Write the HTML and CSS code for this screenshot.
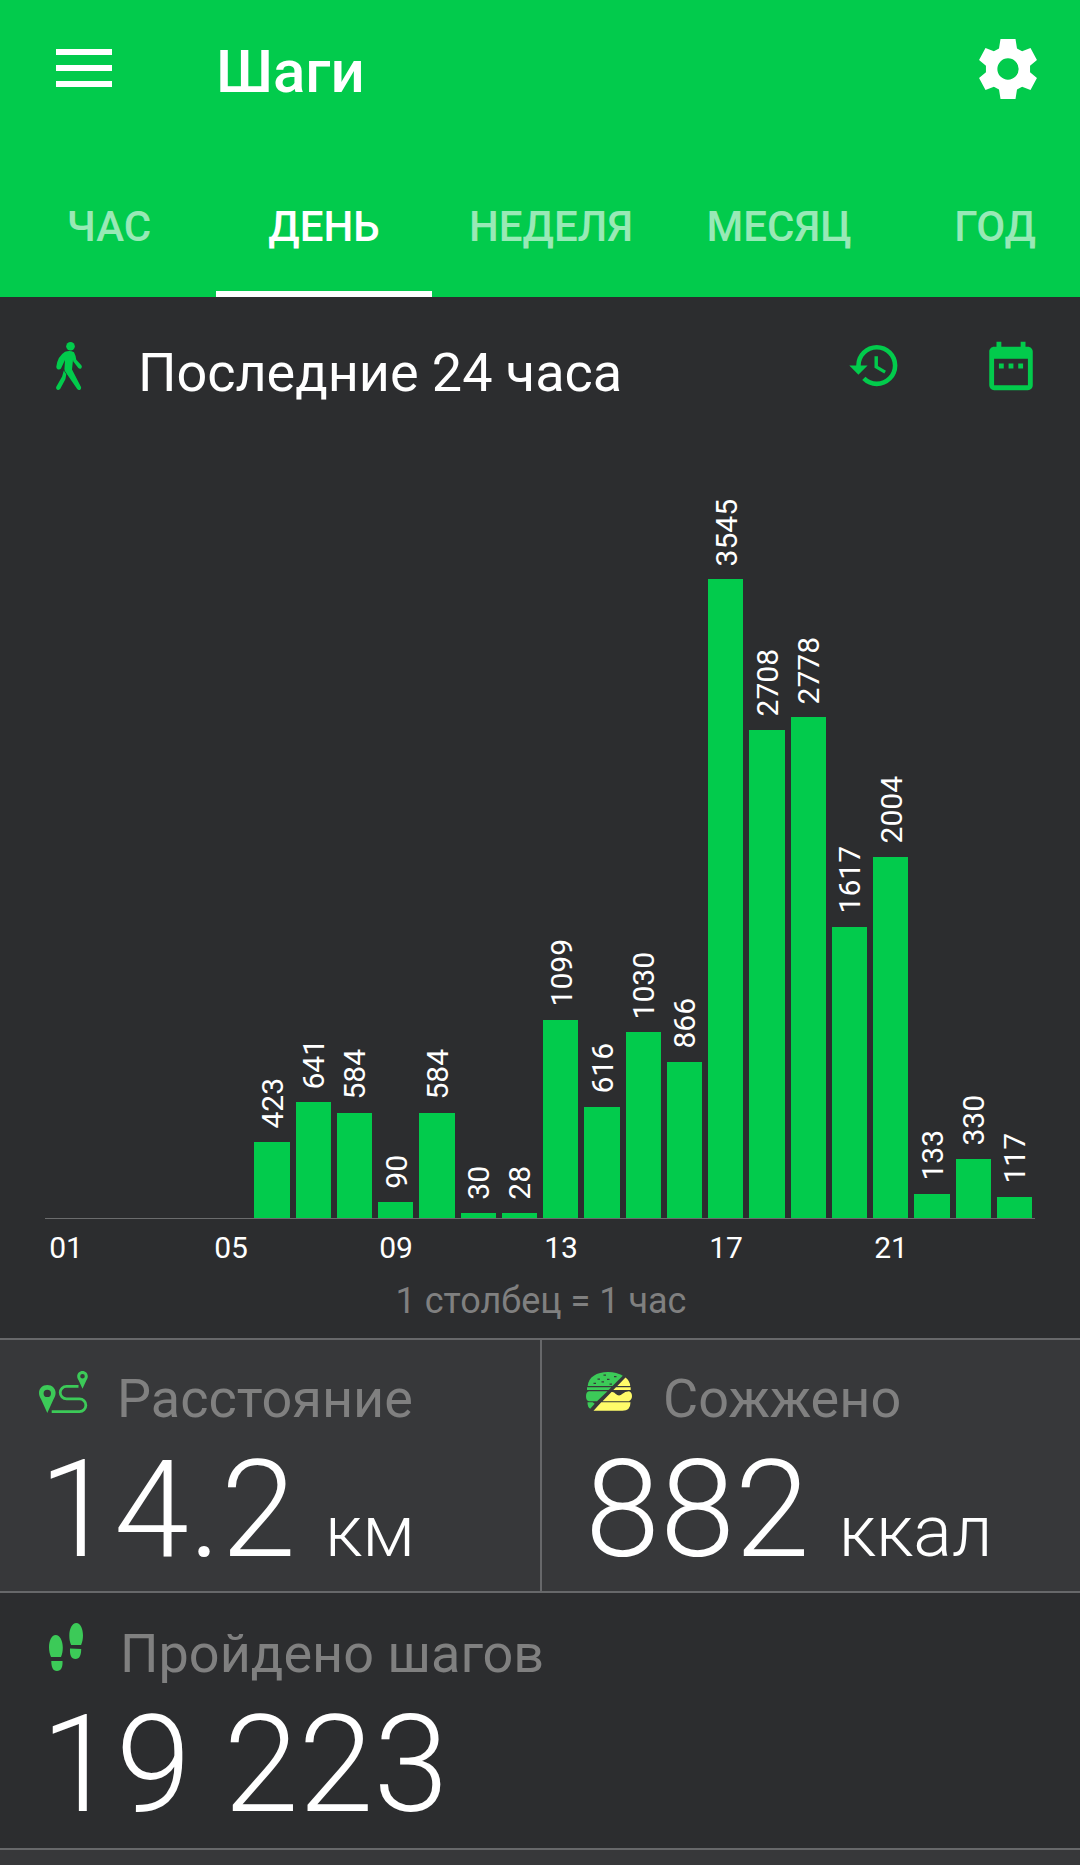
FILE: index.html
```
<!DOCTYPE html>
<html lang="ru">
<head>
    <meta charset="UTF-8">
    <meta name="viewport" content="width=device-width, initial-scale=1.0">
    <title>Шаги</title>
    <link rel="stylesheet" href="styles.css">
</head>
<body>
    <header class="header">
        <div class="toolbar">
            <svg class="menu-icon" viewBox="0 0 56 38"><path d="M0 0h56v6H0zM0 16h56v6H0zM0 32h56v6H0z"/></svg>
            <h1>Шаги</h1>
            <svg class="settings-icon" viewBox="0 0 24 24"><path fill-rule="evenodd" d="M9.500 2h5l.5 3.200L16.700 6.100 19.500 5l2.150 4-2.300 1.900v2.200l2.300 1.900-2.150 4-2.800-1.100-1.700.9-.5 3.200h-5L9 18.800l-1.700-.9L4.500 19l-2.150-4 2.300-1.900v-2.200L2.350 9 4.500 5l2.800 1.100L9 5.200zM12 8.450a3.550 3.550 0 1 0 0 7.100 3.550 3.550 0 0 0 0-7.100z"/></svg>
        </div>
        <nav class="tabs">
            <a class="tab">Час</a>
            <a class="tab active">День</a>
            <a class="tab tab-week">Неделя</a>
            <a class="tab">Месяц</a>
            <a class="tab">Год</a>
        </nav>
    </header>

    <section class="period">
        <svg class="walk-icon" viewBox="0 0 26 48">
            <circle cx="14.500" cy="4.300" r="4.300"/>
            <path d="M9 9.800q5-1.600 9 .4 2 3.800 2.300 7.500l5 5.500q1.200 1.500-.2 3.200-1.500.8-2.800-.5l-5-6.300-.3-1.500-1 9.500 9 17.500q.5 2-1.300 2.900-1.800.3-2.700-1.300L9.500 30q-1.300-1.500-1-4l.5-8-4 8.500q-1.200 1.600-3.500.8Q0 26 .4 24.300q1.300-10 8.600-14.500z"/>
            <path d="M7.800 28.500l2.500 3.700-.9 5-5.100 9.600q-1.200 1.700-3 1-1.700-1-1-3l5.800-10.300z"/>
        </svg>
        <h2>Последние 24 часа</h2>
        <svg class="history-icon" viewBox="0 0 24 24"><path d="M13 3a9 9 0 0 0-9 9H1l3.890 3.890.07.14L9 12H6c0-3.870 3.130-7 7-7s7 3.130 7 7-3.130 7-7 7c-1.930 0-3.680-.79-4.940-2.060l-1.420 1.420A8.954 8.954 0 0 0 13 21a9 9 0 0 0 0-18zm-1 5v5l4.280 2.540.72-1.210-3.500-2.080V8H12z"/></svg>
        <svg class="date-icon" viewBox="0 0 24 24"><path d="M9 11H7v2h2v-2zm4 0h-2v2h2v-2zm4 0h-2v2h2v-2zm2-7h-1V2h-2v2H8V2H6v2H5c-1.110 0-1.990.9-1.990 2L3 20a2 2 0 0 0 2 2h14c1.100 0 2-.9 2-2V6c0-1.100-.9-2-2-2zm0 16H5V9h14v11z"/></svg>
    </section>

    <section class="chart">
        <div class="bars" id="bars"></div>
        <div class="hours" id="hours"></div>
        <p class="legend">1 столбец = 1 час</p>
    </section>

    <section class="stats">
        <div class="stat">
            <div class="stat-label">
                <svg class="route-icon" viewBox="0 0 49 42">
                    <path class="fill" fill-rule="evenodd" d="M8.300 14C3.500 14 0 17.500 0 22c0 2.500 1 4.500 2.300 6.800L8.300 42l6-13.200C15.600 26.500 16.600 24.500 16.600 22c0-4.500-3.500-8-8.300-8zm0 4.700a3.700 3.700 0 1 0 0 7.400 3.700 3.700 0 0 0 0-7.400z"/>
                    <path class="fill" fill-rule="evenodd" d="M43.500 0c-3 0-5.300 2.300-5.300 5.200 0 1.600.7 2.900 1.500 4.300l3.800 8.300 3.800-8.300c.8-1.400 1.500-2.700 1.500-4.300C48.800 2.300 46.500 0 43.500 0zm0 3a2.300 2.300 0 1 0 0 4.600 2.300 2.300 0 0 0 0-4.600z"/>
                    <path class="line" d="M39.500 15.300H27.500a6.300 6.300 0 0 0 0 12.600H40.500a6.300 6.300 0 0 1 0 12.700H12.700"/>
                </svg>
                Расстояние
            </div>
            <div class="stat-value">14.2<span class="unit">км</span></div>
        </div>
        <div class="stat stat-burned">
            <div class="stat-label">
                <svg class="burger-icon" viewBox="0 0 46 39">
                    <path class="bun" d="M1.700 14C2.500 5 10.500 0 22 0q9 0 14.800 3.800L26.500 14z"/>
                    <path class="bun" d="M1 15.200h24.300l-2.700 2.800H1zM3 19.200h18.500L11 29.200H3Q0 28.500 0 24.200t3-5zM1.500 30.300h5.200l2 1.500-4.500 5Q1.300 35 1.500 30.300z"/>
                    <path class="cheese" d="M39.500 5.500Q44 9 44.200 14H31.300zM30 15.200h14.700V18H27.300zM25.500 20q2.500-.5 4 1.800 3.500 3.600 7 0 2.500-2.600 6.500-2.600Q46 20.500 46 24t-3 5.200H16.500zM15.300 30.300h29.200q0 8.500-8 8.500H7.500z"/>
                    <path class="seeds" d="M17.500 2.500h2.500v1.200h-2.500zM28 4h2.500v1.200H28zM11.500 6.500H14v1.200h-2.500zM21 6.800h2.500V8H21zM7.500 10.800H10V12H7.500zM15.500 9.300H18v1.200h-2.500zM23.500 11.500H26v1.200h-2.500z"/>
                </svg>
                Сожжено
            </div>
            <div class="stat-value">882<span class="unit">ккал</span></div>
        </div>
        <div class="stat stat-steps">
            <div class="stat-label">
                <svg class="steps-icon" viewBox="0 0 34 48">
                    <path d="M6.700 12C2.500 12 0 18 0 24.500c0 3.500.8 6.500 2 9.500h10c1.300-3 1.800-6 1.800-9.500C13.800 18 11 12 6.700 12zM2.300 38h11.200c.4 6-1.300 10-5.500 10S2.300 44 2.300 38z"/>
                    <path d="M27.300 0c-4.200 0-7 6-7 12.500 0 3.500.5 6.500 1.800 9.500h10c1.200-3 1.900-6 1.900-9.500C34 6 31.500 0 27.300 0zM21 25.500l11.200.5c0 6-1.500 10-5.700 10S20.600 32 21 25.500z"/>
                </svg>
                Пройдено шагов
            </div>
            <div class="stat-value">19 223</div>
        </div>
    </section>

    <script>
        const steps = [0, 0, 0, 0, 0, 423, 641, 584, 90, 584, 30, 28, 1099, 616, 1030, 866, 3545, 2708, 2778, 1617, 2004, 133, 330, 117];
        const maxHeight = 639;
        const max = Math.max(...steps);
        const bars = document.getElementById('bars');
        const hours = document.getElementById('hours');

        steps.forEach((value, index) => {
            const slot = document.createElement('div');
            slot.className = 'slot';
            if (value) {
                slot.innerHTML = `<span class="bar-value">${value}</span><div class="bar" style="height: ${value / max * maxHeight}px"></div>`;
            }
            bars.appendChild(slot);

            // every fourth hour gets a label
            const hour = document.createElement('span');
            hour.className = 'hour';
            if (index % 4 === 0) {
                hour.textContent = String(index + 1).padStart(2, '0');
            }
            hours.appendChild(hour);
        });
    </script>
</body>
</html>
```
FILE: styles.css
```
* {
    box-sizing: border-box;
}
body {
    margin: 0;
    height: 1865px;
    overflow: hidden;
    background-color: #37383a;
    color: #fff;
    font-family: Roboto, sans-serif;
}
h1, h2, p {
    margin: 0;
}
svg {
    display: block;
    flex: none;
}
.header {
    height: 297px;
    background-color: #02cb4c;
    overflow: hidden;
}
.toolbar {
    display: flex;
    align-items: flex-start;
    height: 165px;
    padding: 33px 36px 0 56px;
}
.menu-icon {
    width: 56px;
    height: 38px;
    margin-top: 16px;
    fill: #fff;
}
h1 {
    flex: 1;
    margin: 4px 0 0 104px;
    font-size: 60px;
    font-weight: 500;
    line-height: 70px;
}
.settings-icon {
    width: 72px;
    height: 72px;
    fill: #fff;
}
.tabs {
    display: flex;
    height: 132px;
}
.tab {
    flex: 0 0 216px;
    padding: 37px 0 0 2px;
    border-bottom: 6px solid transparent;
    color: rgba(255, 255, 255, 0.6);
    font-size: 42px;
    font-weight: 500;
    line-height: 50px;
    text-align: center;
    text-transform: uppercase;
}
.tab-week {
    flex-basis: 238px;
    padding-left: 0;
}
.tab.active {
    padding-left: 0;
    color: #fff;
    border-bottom-color: #fff;
}
.period {
    display: flex;
    align-items: flex-start;
    height: 143px;
    padding: 40px 40px 0 56px;
    background-color: #2c2d2f;
    fill: #02cb4c;
}
.walk-icon {
    width: 26px;
    height: 48px;
    margin-top: 5px;
}
h2 {
    flex: 1;
    margin: 4px 0 0 56px;
    font-size: 54px;
    font-weight: 400;
    line-height: 64px;
    letter-spacing: -0.05px;
}
.history-icon {
    width: 55px;
    height: 55px;
    margin: 1px 80px 0 0;
}
.date-icon {
    width: 58px;
    height: 58px;
}
.chart {
    height: 898px;
    background-color: #2c2d2f;
}
.bars {
    display: flex;
    height: 779px;
    margin: 0 45px;
    border-bottom: 1px solid #6b6c6d;
}
.slot {
    flex: 1;
    display: flex;
    flex-direction: column;
    justify-content: flex-end;
    padding: 0 3px;
}
.bar-value {
    align-self: center;
    margin: 0 -1px 13px 0;
    font-size: 30px;
    line-height: 35px;
    writing-mode: vertical-rl;
    transform: rotate(180deg);
}
.bar {
    background-color: #02cb4c;
}
.hours {
    display: flex;
    height: 61px;
    margin: 0 45px;
    padding-top: 11px;
    font-size: 30px;
    line-height: 36px;
}
.hour {
    flex: 1 1 0;
    padding-left: 1px;
    text-align: center;
}
.legend {
    padding-left: 2px;
    color: #808080;
    font-size: 36px;
    line-height: 42px;
    text-align: center;
}
.stats {
    display: grid;
    grid-template-columns: 540px 540px;
    fill: #3cca58;
}
.stat {
    height: 253px;
    padding: 27px 38px 0;
    border-top: 2px solid #67686a;
}
.stat-burned {
    padding-left: 44px;
    border-left: 2px solid #67686a;
}
.stat-steps {
    grid-column: span 2;
    height: 259px;
    padding-top: 29px;
    border-bottom: 2px solid #67686a;
    background-color: #2c2d2f;
}
.stat-label {
    display: flex;
    align-items: flex-start;
    height: 64px;
    color: #808080;
    font-size: 54px;
    line-height: 63px;
}
.route-icon {
    width: 49px;
    height: 42px;
    margin: 4px 29px 0 1px;
}
.route-icon .line {
    fill: none;
    stroke: #3cca58;
    stroke-width: 2.800;
}
.burger-icon {
    width: 46px;
    height: 39px;
    margin: 5px 31px 0 0;
}
.cheese {
    fill: #fffb69;
}
.seeds {
    fill: #37383a;
}
.steps-icon {
    width: 34px;
    height: 48px;
    margin: 1px 37px 0 11px;
}
.stat-value {
    display: flex;
    align-items: baseline;
    margin-left: 1px;
    font-size: 135px;
    font-weight: 300;
    line-height: 158px;
    white-space: pre;
}
.stat-burned .stat-value {
    margin-left: -1px;
}
.stat-steps .stat-value {
    margin-left: 3px;
}
.unit {
    margin-left: 29px;
    font-size: 72px;
}
```
